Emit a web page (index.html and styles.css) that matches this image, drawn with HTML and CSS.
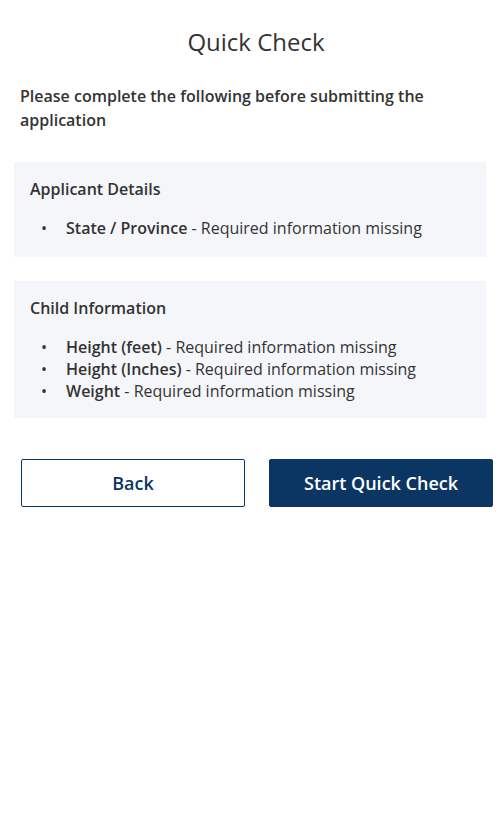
FILE: index.html
```html
<!DOCTYPE html>
<html>
<head>
<meta charset="utf-8">
<link rel="stylesheet" href="styles.css">
</head>
<body>
<main class="page">
  <h1 class="title">Quick Check</h1>
  <p class="intro">Please complete the following before submitting the application</p>
  <section class="card card-first">
    <h2 class="card-title">Applicant Details</h2>
    <ul class="issues">
      <li><span class="dot">•</span><span><b>State / Province</b> - Required information missing</span></li>
    </ul>
  </section>
  <section class="card card-last">
    <h2 class="card-title">Child Information</h2>
    <ul class="issues">
      <li><span class="dot">•</span><span><b>Height (feet)</b> - Required information missing</span></li>
      <li><span class="dot">•</span><span><b>Height (Inches)</b> - Required information missing</span></li>
      <li><span class="dot">•</span><span><b>Weight</b> - Required information missing</span></li>
    </ul>
  </section>
  <div class="actions">
    <button class="btn btn-outline">Back</button>
    <button class="btn btn-solid">Start Quick Check</button>
  </div>
</main>
</body>
</html>
```
FILE: styles.css
```css
* { box-sizing: border-box; }
body {
  margin: 0;
  background: #fff;
  font-family: "Open Sans", "Noto Sans", sans-serif;
  color: #333;
}
.page {
  padding: 26px 14px 0 14px;
}
.title {
  margin: 0;
  padding-left: 12px;
  text-align: center;
  font-size: 24px;
  line-height: 32px;
  font-weight: 400;
  color: #333;
}
.intro {
  margin: 26px 0 30px 0;
  padding: 0 20px 0 6px;
  font-size: 16px;
  line-height: 24px;
  font-weight: 600;
  color: #333;
}
.card {
  background: #f5f6fa;
  padding: 16px 16px 17px 16px;
  margin-bottom: 24px;
}
.card-first { padding-bottom: 18px; }
.card-last { padding-bottom: 16px; }
.card-title {
  margin: 0 0 17px 0;
  font-size: 16px;
  line-height: 22px;
  font-weight: 600;
  color: #333;
}
.issues {
  list-style: none;
  margin: 0;
  padding: 0;
}
.issues li {
  display: flex;
  font-size: 16px;
  line-height: 22px;
  color: #333;
}
.issues b { font-weight: 600; }
.dot {
  width: 36px;
  flex: none;
  padding-left: 11px;
}
.actions {
  display: flex;
  gap: 24px;
  margin: 41px -7px 0 7px;
}
.btn {
  flex: 1;
  height: 48px;
  border-radius: 2px;
  border: 1px solid #0b3562;
  font-family: "Open Sans", "Noto Sans", sans-serif;
  font-size: 18px;
  font-weight: 600;
  cursor: pointer;
}
.btn-outline {
  background: #fff;
  color: #0b3562;
}
.btn-solid {
  background: #0b3562;
  color: #fff;
}
```
